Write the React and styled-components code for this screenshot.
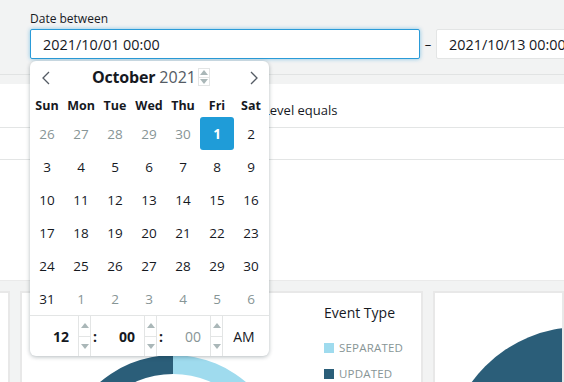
import React from 'react';
import styled, { createGlobalStyle } from 'styled-components';

const GlobalStyle = createGlobalStyle`
  html, body {
    margin: 0;
    padding: 0;
    background: #f2f3f3;
    font-family: 'Open Sans', 'Noto Sans', sans-serif;
    color: #16191f;
  }
  body {
    width: 564px;
    height: 382px;
    overflow: hidden;
  }
`;

const prevMonth = [26, 27, 28, 29, 30];
const nextMonth = [1, 2, 3, 4, 5, 6];

function buildDays() {
  const days = prevMonth.map((d) => ({ d, muted: true }));
  for (let i = 1; i <= 31; i++) days.push({ d: i, selected: i === 1 });
  nextMonth.forEach((d) => days.push({ d, muted: true }));
  return days;
}

function Chevron({ dir }) {
  return (
    <svg width="10" height="14" viewBox="0 0 10 14">
      <path
        d={dir === 'left' ? 'M8 1 L2 7 L8 13' : 'M2 1 L8 7 L2 13'}
        fill="none"
        stroke="#545b64"
        strokeWidth="1.3"
      />
    </svg>
  );
}

function Spinner({ small }) {
  return (
    <SpinBox $small={small}>
      <SpinHalf>
        <svg width="8" height="5" viewBox="0 0 8 5">
          <path d="M0 5 L4 0 L8 5 Z" fill="#aab7b8" />
        </svg>
      </SpinHalf>
      <SpinHalf $bottom>
        <svg width="8" height="5" viewBox="0 0 8 5">
          <path d="M0 0 L4 5 L8 0 Z" fill="#aab7b8" />
        </svg>
      </SpinHalf>
    </SpinBox>
  );
}

function Calendar() {
  const days = buildDays();
  return (
    <Popup>
      <CalHeader>
        <NavButton><Chevron dir="left" /></NavButton>
        <MonthTitle>
          <strong>October</strong> <span>2021</span>
          <Spinner small />
        </MonthTitle>
        <NavButton><Chevron dir="right" /></NavButton>
      </CalHeader>
      <DayGrid>
        {['Sun', 'Mon', 'Tue', 'Wed', 'Thu', 'Fri', 'Sat'].map((w) => (
          <WeekDay key={w}>{w}</WeekDay>
        ))}
        {days.map((day, i) => (
          <DayCell key={i} $muted={day.muted} $selected={day.selected}>
            {day.d}
          </DayCell>
        ))}
      </DayGrid>
      <TimeRow>
        <TimeField $first $bold>12</TimeField>
        <Spinner />
        <Colon>:</Colon>
        <TimeField $bold>00</TimeField>
        <Spinner />
        <Colon>:</Colon>
        <TimeField $muted>00</TimeField>
        <Spinner />
        <Meridiem>AM</Meridiem>
      </TimeRow>
    </Popup>
  );
}

function HalfDonut({ size, outer, inner }) {
  const c = size / 2;
  return (
    <svg width={size} height={size} viewBox={`0 0 ${size} ${size}`}>
      <path d={`M${c} ${c - outer} A${outer} ${outer} 0 0 0 ${c} ${c + outer} L${c} ${c + inner} A${inner} ${inner} 0 0 1 ${c} ${c - inner} Z`} fill="#2b5e79" />
      <path d={`M${c} ${c - outer} A${outer} ${outer} 0 0 1 ${c} ${c + outer} L${c} ${c + inner} A${inner} ${inner} 0 0 0 ${c} ${c - inner} Z`} fill="#9fdbee" />
    </svg>
  );
}

function Pie({ size }) {
  const c = size / 2;
  return (
    <svg width={size} height={size} viewBox={`0 0 ${size} ${size}`}>
      <circle cx={c} cy={c} r={c - 1} fill="#2b5e79" />
    </svg>
  );
}

export default function App() {
  return (
    <>
      <GlobalStyle />
      <Page>
        <FilterBar>
          <Label>Date between</Label>
          <InputRow>
            <DateInput $focused>2021/10/01 00:00</DateInput>
            <Dash>–</Dash>
            <DateInput>2021/10/13 00:00</DateInput>
          </InputRow>
          <Calendar />
        </FilterBar>
        <Band />
        <ControlsPanel>
          <ControlRow $tall>
            <span />
            <ControlText>Level equals</ControlText>
          </ControlRow>
          <ControlRow />
        </ControlsPanel>
        <CardsRow>
          <Card $cut />
          <Card>
            <ChartArea>
              <HalfDonut size={224} outer={112} inner={93} />
            </ChartArea>
            <Legend>
              <LegendTitle>Event Type</LegendTitle>
              <LegendItem><Swatch $color="#9fdbee" />SEPARATED</LegendItem>
              <LegendItem><Swatch $color="#2b5e79" />UPDATED</LegendItem>
            </Legend>
          </Card>
          <Card>
            <BigChart>
              <Pie size={270} />
            </BigChart>
          </Card>
        </CardsRow>
      </Page>
    </>
  );
}

const Page = styled.div`
  width: 564px;
  height: 382px;
  overflow: hidden;
  background: #f2f3f3;
  display: flex;
  flex-direction: column;
`;

const FilterBar = styled.div`
  position: relative;
  flex: none;
  height: 75px;
  box-sizing: border-box;
  padding: 11px 0 0 30px;
  border-bottom: 1px solid #e1e3e3;
  z-index: 5;
`;

const Label = styled.div`
  font-size: 12px;
  line-height: 16px;
  color: #16191f;
  margin-bottom: 2px;
`;

const InputRow = styled.div`
  display: flex;
  align-items: center;
`;

const DateInput = styled.div`
  box-sizing: border-box;
  flex: none;
  width: ${(p) => (p.$focused ? '390px' : '200px')};
  height: 30px;
  padding: 0 12px;
  display: flex;
  align-items: center;
  background: #fff;
  font-size: 14.4px;
  color: #16191f;
  white-space: nowrap;
  border: 1px solid ${(p) => (p.$focused ? '#2a9bd8' : '#e3e5e5')};
  border-radius: 2px;
  box-shadow: ${(p) => (p.$focused ? '0 0 4px rgba(0, 140, 210, 0.45)' : 'none')};
`;

const Dash = styled.span`
  flex: none;
  width: 16px;
  text-align: center;
  font-size: 13px;
  color: #16191f;
`;

const Popup = styled.div`
  position: absolute;
  top: 61px;
  left: 30px;
  width: 239px;
  background: #fff;
  border-radius: 6px;
  box-shadow: 0 1px 4px rgba(0, 28, 36, 0.3);
  overflow: hidden;
`;

const CalHeader = styled.div`
  display: flex;
  align-items: center;
  justify-content: space-between;
  height: 32px;
  padding: 0 8px 0 9px;
`;

const NavButton = styled.div`
  width: 14px;
  display: flex;
  justify-content: center;
  padding-top: 1px;
`;

const MonthTitle = styled.div`
  display: flex;
  align-items: center;
  font-size: 16px;
  margin-left: 2px;
  strong {
    font-weight: 700;
    color: #16191f;
    letter-spacing: -0.2px;
  }
  span {
    margin-left: 4px;
    color: #545b64;
  }
`;

const SpinBox = styled.div`
  display: flex;
  flex-direction: column;
  flex: none;
  width: ${(p) => (p.$small ? '12px' : '13px')};
  height: ${(p) => (p.$small ? '18px' : '40px')};
  margin-left: ${(p) => (p.$small ? '2px' : '0')};
  border: 1px solid #e3e5e5;
  border-width: ${(p) => (p.$small ? '1px' : '0 1px')};
  box-sizing: border-box;
`;

const SpinHalf = styled.div`
  flex: 1;
  display: flex;
  align-items: center;
  justify-content: center;
  border-top: ${(p) => (p.$bottom ? '1px solid #e3e5e5' : 'none')};
`;

const DayGrid = styled.div`
  display: grid;
  grid-template-columns: repeat(7, 34px);
  grid-template-rows: 24px;
  grid-auto-rows: 33px;
`;

const WeekDay = styled.div`
  display: flex;
  align-items: center;
  justify-content: center;
  font-size: 12.5px;
  font-weight: 700;
  color: #16191f;
`;

const DayCell = styled.div`
  display: flex;
  align-items: center;
  justify-content: center;
  font-size: 13.5px;
  color: ${(p) => (p.$selected ? '#fff' : p.$muted ? '#879596' : '#16191f')};
  font-weight: ${(p) => (p.$selected ? 700 : 400)};
  background: ${(p) => (p.$selected ? '#1f9cd8' : 'transparent')};
  border-radius: 3px;
`;

const TimeRow = styled.div`
  display: flex;
  align-items: center;
  height: 40px;
  border-top: 1px solid #e3e5e5;
`;

const TimeField = styled.div`
  width: ${(p) => (p.$first ? '48px' : '45px')};
  box-sizing: border-box;
  padding-right: 9px;
  text-align: right;
  font-size: 14px;
  font-weight: ${(p) => (p.$bold ? 700 : 400)};
  color: ${(p) => (p.$muted ? '#879596' : '#16191f')};
`;

const Colon = styled.div`
  width: 8px;
  text-align: left;
  padding-left: 2px;
  box-sizing: border-box;
  font-size: 14px;
  font-weight: 700;
`;

const Meridiem = styled.div`
  flex: 1;
  text-align: center;
  font-size: 14px;
  color: #16191f;
  padding-right: 4px;
`;

const Band = styled.div`
  flex: none;
  height: 9px;
  background: #f2f3f3;
`;

const ControlsPanel = styled.div`
  flex: none;
  height: 196px;
  background: #fff;
`;

const ControlRow = styled.div`
  display: grid;
  grid-template-columns: 263px 1fr;
  align-items: center;
  height: ${(p) => (p.$tall ? '44px' : '32px')};
  border-bottom: 1px solid #e3e5e5;
  box-sizing: border-box;
`;

const ControlText = styled.span`
  font-size: 13px;
  color: #16191f;
  padding-top: 9px;
`;

const CardsRow = styled.div`
  flex: 1;
  display: grid;
  grid-template-columns: 10px 403px 1fr;
  gap: 10px;
  padding-top: 10px;
  border-top: 1px solid #eaeaea;
  box-sizing: border-box;
  min-height: 0;
`;

const Card = styled.div`
  position: relative;
  background: #fff;
  border: 2px solid #e8e8e8;
  border-left-width: ${(p) => (p.$cut ? '0' : '2px')};
  border-bottom: none;
  overflow: hidden;
  display: flex;
`;

const ChartArea = styled.div`
  flex: none;
  width: 300px;
  display: flex;
  justify-content: center;
  padding-top: 62px;
  margin-left: 1px;
`;

const Legend = styled.div`
  padding-top: 10px;
  padding-left: 1px;
`;

const LegendTitle = styled.div`
  font-size: 14px;
  color: #16191f;
  margin-bottom: 18px;
`;

const LegendItem = styled.div`
  display: flex;
  align-items: center;
  font-size: 11.5px;
  color: #879596;
  letter-spacing: 0.2px;
  margin-bottom: 11px;
  white-space: nowrap;
`;

const Swatch = styled.span`
  flex: none;
  width: 10px;
  height: 10px;
  background: ${(p) => p.$color};
  margin-right: 5px;
`;

const BigChart = styled.div`
  flex: none;
  padding: 33px 0 0 10px;
`;
